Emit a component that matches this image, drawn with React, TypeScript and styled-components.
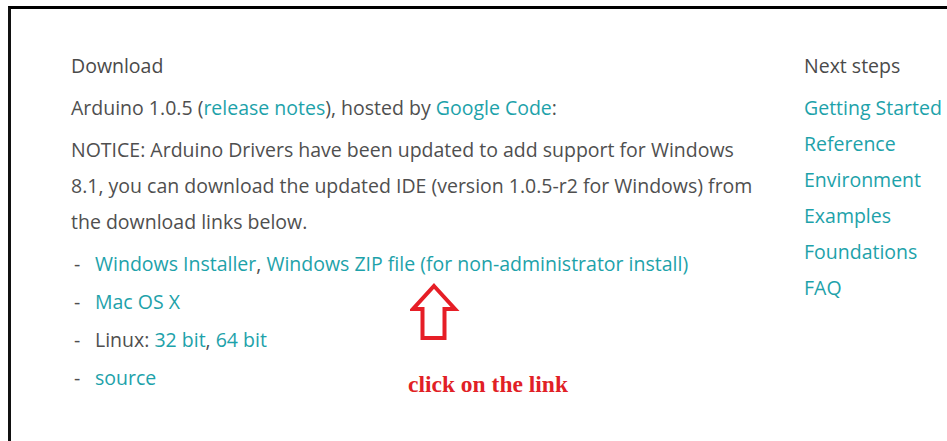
import styled, { createGlobalStyle } from 'styled-components';

const GlobalStyle = createGlobalStyle`
  html, body {
    margin: 0;
    padding: 0;
    background: #fff;
    overflow: hidden;
  }
  body {
    font-family: 'Open Sans', 'Noto Sans', sans-serif;
  }
`;

const Frame = styled.div`
  position: relative;
  margin: 6px 0 0 8px;
  height: 440px;
  border-top: 3px solid #000;
  border-left: 3px solid #111;
  box-sizing: border-box;
  overflow: hidden;
`;

const Columns = styled.div`
  display: grid;
  grid-template-columns: 733px 200px;
  padding: 39px 0 0 60px;
  white-space: nowrap;
`;

const Main = styled.section`
  color: #4f4f4f;
  font-size: 19.5px;
  line-height: 36px;
`;

const Heading = styled.h3`
  margin: 0 0 6px;
  font-size: 19.5px;
  font-weight: 400;
  line-height: 36px;
  color: #4a4a4a;
`;

const Para = styled.p`
  margin: 0 0 6px;
`;

const Link = styled.a`
  color: #1da2aa;
  text-decoration: none;
`;

const Downloads = styled.ul`
  list-style: none;
  margin: -1px 0 0;
  padding: 0;
`;

const Item = styled.li`
  display: flex;
  height: 38px;
  align-items: center;
  &::before {
    content: '-';
    width: 24px;
    padding-left: 3px;
    box-sizing: border-box;
  }
`;

const Side = styled.aside`
  display: flex;
  flex-direction: column;
  font-size: 19.5px;
  line-height: 36px;
`;

const SideLink = styled(Link)`
  display: block;
`;

const Arrow = styled.svg`
  position: absolute;
  left: 399px;
  top: 274px;
`;

const Caption = styled.div`
  position: absolute;
  left: 397px;
  top: 362px;
  font-family: 'Liberation Serif', serif;
  font-weight: 700;
  font-size: 23.5px;
  color: #e11f26;
`;

const nextSteps = ['Getting Started', 'Reference', 'Environment', 'Examples', 'Foundations', 'FAQ'];

export default function App() {
  return (
    <>
      <GlobalStyle />
      <Frame>
        <Columns>
          <Main>
            <Heading>Download</Heading>
            <Para>
              Arduino 1.0.5 (<Link href='#'>release notes</Link>), hosted by{' '}
              <Link href='#'>Google Code</Link>:
            </Para>
            <Para>
              NOTICE: Arduino Drivers have been updated to add support for Windows
              <br />
              8.1, you can download the updated IDE (version 1.0.5-r2 for Windows) from
              <br />
              the download links below.
            </Para>
            <Downloads>
              <Item>
                <span>
                  <Link href='#'>Windows Installer</Link>, <Link href='#'>Windows ZIP file (for non-administrator install)</Link>
                </span>
              </Item>
              <Item>
                <Link href='#'>Mac OS X</Link>
              </Item>
              <Item>
                <span>
                  Linux: <Link href='#'>32 bit</Link>, <Link href='#'>64 bit</Link>
                </span>
              </Item>
              <Item>
                <Link href='#'>source</Link>
              </Item>
            </Downloads>
          </Main>
          <Side>
            <Heading>Next steps</Heading>
            {nextSteps.map((name) => (
              <SideLink key={name} href='#'>
                {name}
              </SideLink>
            ))}
          </Side>
        </Columns>
        {/* hollow pointer arrow under the zip link */}
        <Arrow width='52' height='60' viewBox='0 0 52 60'>
          <path
            d='M24 3 L45 26 L34.5 26 L34.5 55 L12.5 55 L12.5 26 L3 26 Z'
            fill='none'
            stroke='#e61e26'
            strokeWidth='4'
            strokeLinejoin='miter'
          />
        </Arrow>
        <Caption>click on the link</Caption>
      </Frame>
    </>
  );
}
